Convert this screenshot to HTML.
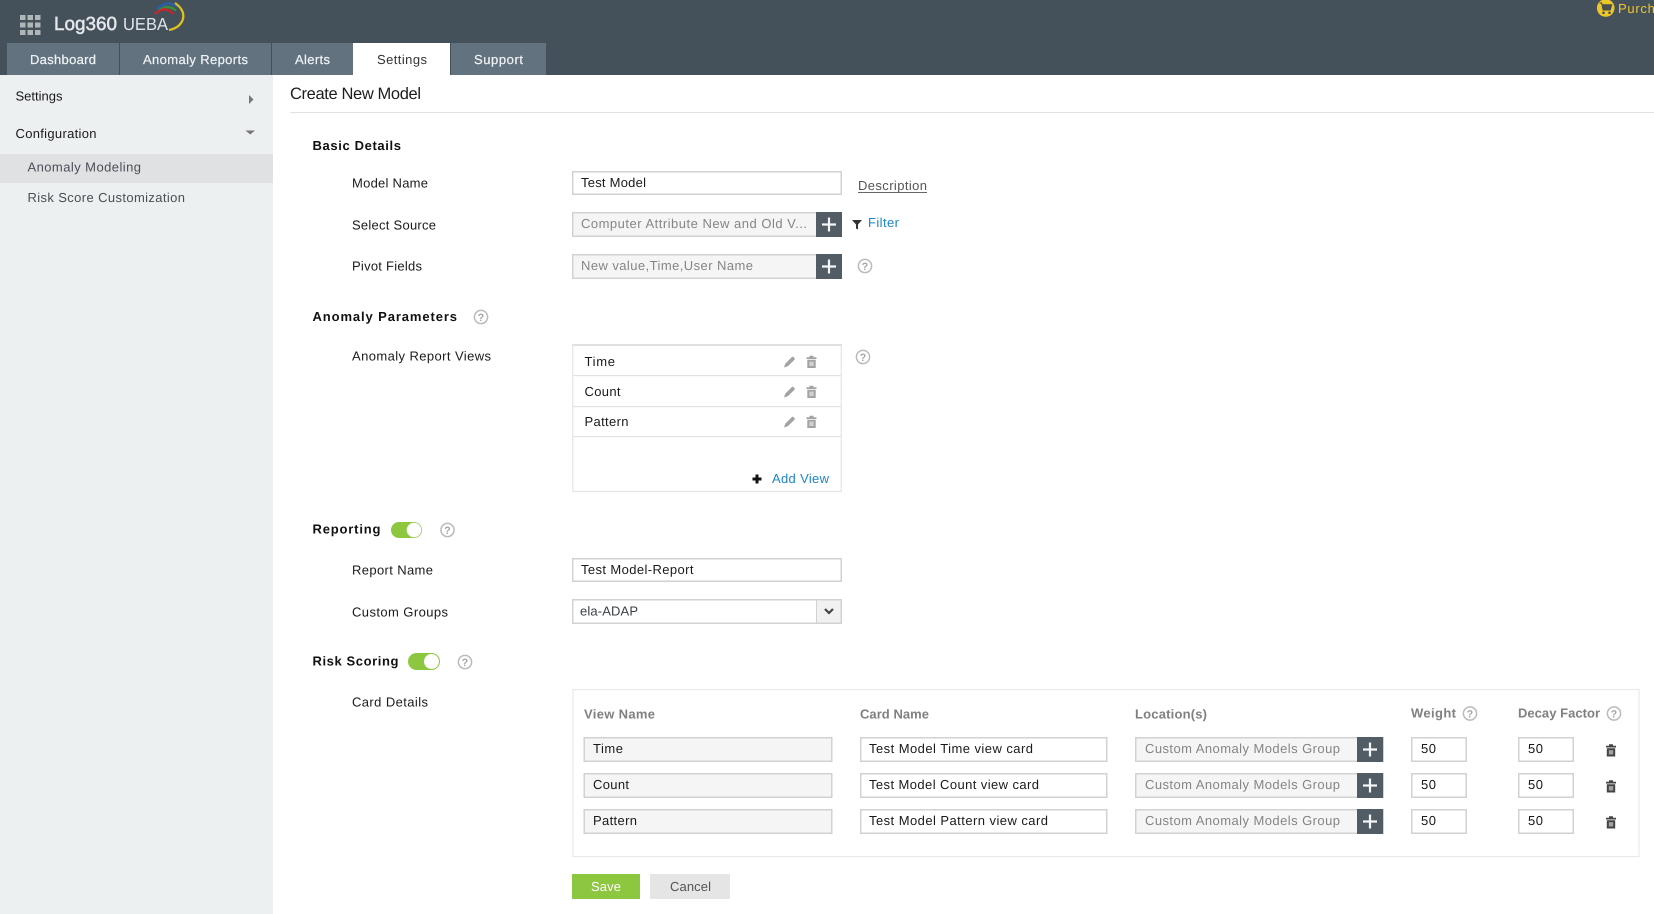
<!DOCTYPE html>
<html lang="en"><head><meta charset="utf-8"><title>Create New Model</title>
<style>
html,body{margin:0;padding:0;width:1654px;height:914px;overflow:hidden;background:#fff}
svg{display:block}
text{font-family:"Liberation Sans",sans-serif;font-size:13px;fill:#333;text-rendering:geometricPrecision}
.b{font-weight:bold;fill:#111}
.t{fill:#f0f3f5;stroke:#f0f3f5;stroke-width:.2px}
.g{fill:#858585}
.d{fill:#1a1a1a}
.h{font-weight:bold;fill:#808080}
.l{fill:#1a86c7}
.s{fill:#3a4046}
.q{font-size:10.5px;font-weight:bold;fill:#a5a5a5;text-anchor:middle}
.i{fill:#fff;stroke:#d2d2d2;stroke-width:1.5}
.r{fill:#f5f5f5;stroke:#d2d2d2;stroke-width:1.5}
</style></head><body>
<svg width="1654" height="914" viewBox="0 0 1654 914" xmlns="http://www.w3.org/2000/svg">
<defs>
<g id="help"><circle r="6.6" fill="#fff" stroke="#bbb" stroke-width="1.5"/></g>
<g id="plus"><rect x="-13" y="-12.500" width="26" height="25" fill="#515c65"/><path d="M-7 0H7M0-7V7" stroke="#f4f5f6" stroke-width="2.200"/></g>
<g id="pen"><path d="M-6 6l1.200-3.800 6.600-6.600a1.200 1.200 0 0 1 1.700 0l1 1a1.200 1.200 0 0 1 0 1.700L-2.200 4.800z" fill="#a3a3a3"/></g>
<g id="trash"><path d="M-5-4.800h10v1.800H-5zM-2-6.200h4v1.500h-4zM-4.200-2.200h8.400V6h-8.400z" fill="currentColor"/><rect x="-2.200" y="-.4" width="4.400" height="4.400" fill="#fff" opacity=".5"/></g>
</defs>

<!-- header -->
<rect width="1654" height="75" fill="#44515b"/>
<g fill="#b0b5b8">
<rect x="20" y="15" width="5.500" height="5"/><rect x="27.500" y="15" width="5.500" height="5"/><rect x="35" y="15" width="5.500" height="5"/>
<rect x="20" y="22.500" width="5.500" height="5"/><rect x="27.500" y="22.500" width="5.500" height="5"/><rect x="35" y="22.500" width="5.500" height="5"/>
<rect x="20" y="30" width="5.500" height="5"/><rect x="27.500" y="30" width="5.500" height="5"/><rect x="35" y="30" width="5.500" height="5"/>
</g>
<text x="54" y="30" textLength="63" lengthAdjust="spacingAndGlyphs" style="font-size:19px;fill:#e6e8e9;stroke:#e6e8e9;stroke-width:.5px">Log360</text>
<text x="123" y="30" textLength="45" lengthAdjust="spacingAndGlyphs" style="font-size:17.500px;fill:#e2e5e7">UEBA</text>
<g fill="none">
<path d="M157 9Q167-1 178 7" stroke="#2b5ea8" stroke-width="2.400"/>
<path d="M158 11.500Q167 3 176 10.500" stroke="#3a8f3f" stroke-width="2.400"/>
<path d="M155 14Q165 5 173.500 14" stroke="#c4262e" stroke-width="2.400"/>
<path d="M175 3Q185 10 183 19Q180 28 169 30" stroke="#e2c31d" stroke-width="2.200"/>
</g>
<rect x="7" y="43" width="112" height="32" fill="#62737f"/>
<rect x="120" y="43" width="151" height="32" fill="#62737f"/>
<rect x="272" y="43" width="81" height="32" fill="#62737f"/>
<rect x="353" y="43" width="97" height="32" fill="#fff"/>
<rect x="451" y="43" width="95" height="32" fill="#62737f"/>
<text class="t" x="30" y="64" textLength="66">Dashboard</text>
<text class="t" x="143" y="64" textLength="105">Anomaly Reports</text>
<text class="t" x="295" y="64" textLength="35">Alerts</text>
<text x="377" y="64" textLength="50">Settings</text>
<text class="t" x="474" y="64" textLength="49">Support</text>
<circle cx="1605.700" cy="8" r="8.800" fill="#edc728"/>
<path d="M1599.500 3h2.200l1.300 7h7.300l1.400-5.200h-9.300" fill="#4a4f4f" stroke="#4a4f4f"/><circle cx="1603.500" cy="12.800" r="1.300" fill="#4a4f4f"/><circle cx="1609.500" cy="12.800" r="1.300" fill="#4a4f4f"/>
<text x="1618" y="13" style="fill:#eec52b" textLength="60">Purchase</text>

<!-- sidebar -->
<rect y="75" width="273" height="839" fill="#ecf0f1"/>
<rect y="154" width="273" height="29" fill="#dfe1e3"/>
<text class="d" x="15.500" y="100.500" textLength="47">Settings</text>
<path d="M249 95l4.500 4.500-4.500 4.500z" fill="#777"/>
<text class="d" x="15.500" y="138" textLength="81">Configuration</text>
<path d="M245.500 130.500h9.500l-4.750 4z" fill="#777"/>
<text x="27.500" y="171.500" textLength="113.500" style="fill:#4a4f55">Anomaly Modeling</text>
<text x="27.500" y="202" textLength="157.500" style="fill:#4a4f55">Risk Score Customization</text>

<!-- main -->
<text x="290" y="99" textLength="131" style="font-size:16.500px;fill:#1d1d1d">Create New Model</text>
<rect x="290" y="112" width="1364" height="1" fill="#e2e2e2"/>

<text class="b" x="312.500" y="150" textLength="88.500">Basic Details</text>
<text class="d" x="352" y="187.500" textLength="76">Model Name</text>
<rect class="i" x="572.750" y="171.750" width="268.500" height="22.500"/>
<text class="d" x="581" y="187" textLength="65">Test Model</text>
<text x="858" y="190" textLength="69" style="fill:#555">Description</text>
<rect x="858" y="192" width="69" height="1" fill="#666"/>

<text class="d" x="352" y="229.500" textLength="84">Select Source</text>
<rect class="r" x="572.750" y="212.750" width="268.500" height="23.500"/>
<text class="g" x="581" y="228" textLength="226">Computer Attribute New and Old V...</text>
<use href="#plus" x="829" y="224.500"/>
<path d="M852 220h10l-4 4.500v5l-2-1v-4z" fill="#333"/>
<text class="l" x="868" y="227" textLength="31">Filter</text>

<text class="d" x="352" y="270.500" textLength="70">Pivot Fields</text>
<rect class="r" x="572.750" y="254.750" width="268.500" height="23.500"/>
<text class="g" x="581" y="270" textLength="172">New value,Time,User Name</text>
<use href="#plus" x="829" y="266.500"/>
<use href="#help" x="865" y="266"/><text class="q" x="865" y="270">?</text>

<text class="b" x="312.500" y="321" textLength="144.500">Anomaly Parameters</text>
<use href="#help" x="481" y="317"/><text class="q" x="481" y="321">?</text>
<text class="d" x="352" y="360.500" textLength="139">Anomaly Report Views</text>

<rect x="572.750" y="345" width="268.500" height="146.500" fill="#fff" stroke="#e4e4e4" stroke-width="1.200"/>
<rect x="572" y="344" width="270" height="2" fill="#e0e0e0"/>
<rect x="573" y="375" width="268" height="1.200" fill="#e2e2e2"/>
<rect x="573" y="406" width="268" height="1.200" fill="#e2e2e2"/>
<rect x="573" y="436" width="268" height="1.200" fill="#e2e2e2"/>
<text class="d" x="584.500" y="366" textLength="30.500">Time</text>
<text class="d" x="584.500" y="396" textLength="36">Count</text>
<text class="d" x="584.500" y="426" textLength="44">Pattern</text>
<g style="color:#a3a3a3">
<use href="#pen" x="790" y="361.500"/><use href="#trash" x="811.500" y="362"/>
<use href="#pen" x="790" y="391.500"/><use href="#trash" x="811.500" y="392"/>
<use href="#pen" x="790" y="421.500"/><use href="#trash" x="811.500" y="422"/>
</g>
<path d="M757 474.500v9M752.500 479h9" stroke="#111" stroke-width="3"/>
<text class="l" x="772" y="483" textLength="57">Add View</text>
<use href="#help" x="863" y="357"/><text class="q" x="863" y="361">?</text>

<text class="b" x="312.500" y="533.500" textLength="68">Reporting</text>
<rect x="391" y="522" width="31" height="16" rx="8" fill="#8dc63f"/>
<circle cx="414" cy="530" r="7.300" fill="#fff"/>
<use href="#help" x="447.500" y="530"/><text class="q" x="447.500" y="534">?</text>
<text class="d" x="352" y="574.500" textLength="81">Report Name</text>
<rect class="i" x="572.750" y="558.750" width="268.500" height="22.500"/>
<text class="d" x="581" y="574" textLength="112.500">Test Model-Report</text>
<text class="d" x="352" y="616.500" textLength="96">Custom Groups</text>
<rect class="i" x="572.750" y="599.750" width="268.500" height="23.500"/>
<rect x="816" y="600.500" width="24.500" height="22" fill="#f1f1f1"/><rect x="816" y="600" width="1" height="23" fill="#d2d2d2"/>
<path d="M825 609l4 4 4-4" fill="none" stroke="#444" stroke-width="2.200"/>
<text class="s" x="580" y="615.500" textLength="58">ela-ADAP</text>

<text class="b" x="312.500" y="665.500" textLength="86">Risk Scoring</text>
<rect x="408" y="653" width="32" height="17" rx="8.500" fill="#8dc63f"/>
<circle cx="431.500" cy="661.500" r="7.500" fill="#fff"/>
<use href="#help" x="465" y="662"/><text class="q" x="465" y="666">?</text>
<text class="d" x="352" y="706.500" textLength="76">Card Details</text>

<rect x="573" y="689.500" width="1066" height="167" fill="#fff" stroke="#e8e8e8" stroke-width="1.200"/>
<text class="h" x="584" y="718.500" textLength="71">View Name</text>
<text class="h" x="860" y="718.500" textLength="69">Card Name</text>
<text class="h" x="1135" y="718.500" textLength="72">Location(s)</text>
<text class="h" x="1411" y="717.500" textLength="45">Weight</text>
<text class="h" x="1518" y="717.500" textLength="82">Decay Factor</text>
<use href="#help" x="1470" y="713.500"/><text class="q" x="1470" y="717.500">?</text>
<use href="#help" x="1614" y="713.500"/><text class="q" x="1614" y="717.500">?</text>

<!-- row 1 -->
<rect class="r" x="584.250" y="737.750" width="247.500" height="23.500"/>
<text class="d" x="593" y="753" textLength="30">Time</text>
<rect class="i" x="860.750" y="737.750" width="246" height="23.500"/>
<text class="d" x="869" y="753" textLength="164">Test Model Time view card</text>
<rect class="r" x="1135.750" y="737.750" width="247.500" height="23.500"/>
<text class="g" x="1145" y="753" textLength="195">Custom Anomaly Models Group</text>
<use href="#plus" x="1370" y="749.500"/>
<rect class="i" x="1411.750" y="737.750" width="54.500" height="23.500"/>
<text class="d" x="1421" y="753" textLength="15">50</text>
<rect class="i" x="1518.750" y="737.750" width="54.500" height="23.500"/>
<text class="d" x="1528" y="753" textLength="15">50</text>
<use href="#trash" x="1611" y="750.500" style="color:#444"/>

<!-- row 2 -->
<rect class="r" x="584.250" y="773.750" width="247.500" height="23.500"/>
<text class="d" x="593" y="789" textLength="36">Count</text>
<rect class="i" x="860.750" y="773.750" width="246" height="23.500"/>
<text class="d" x="869" y="789" textLength="170">Test Model Count view card</text>
<rect class="r" x="1135.750" y="773.750" width="247.500" height="23.500"/>
<text class="g" x="1145" y="789" textLength="195">Custom Anomaly Models Group</text>
<use href="#plus" x="1370" y="785.500"/>
<rect class="i" x="1411.750" y="773.750" width="54.500" height="23.500"/>
<text class="d" x="1421" y="789" textLength="15">50</text>
<rect class="i" x="1518.750" y="773.750" width="54.500" height="23.500"/>
<text class="d" x="1528" y="789" textLength="15">50</text>
<use href="#trash" x="1611" y="786.500" style="color:#444"/>

<!-- row 3 -->
<rect class="r" x="584.250" y="809.750" width="247.500" height="23.500"/>
<text class="d" x="593" y="825" textLength="44">Pattern</text>
<rect class="i" x="860.750" y="809.750" width="246" height="23.500"/>
<text class="d" x="869" y="825" textLength="179">Test Model Pattern view card</text>
<rect class="r" x="1135.750" y="809.750" width="247.500" height="23.500"/>
<text class="g" x="1145" y="825" textLength="195">Custom Anomaly Models Group</text>
<use href="#plus" x="1370" y="821.500"/>
<rect class="i" x="1411.750" y="809.750" width="54.500" height="23.500"/>
<text class="d" x="1421" y="825" textLength="15">50</text>
<rect class="i" x="1518.750" y="809.750" width="54.500" height="23.500"/>
<text class="d" x="1528" y="825" textLength="15">50</text>
<use href="#trash" x="1611" y="822.500" style="color:#444"/>

<rect x="572" y="874" width="68" height="25" fill="#8dc63f"/>
<text x="591" y="891" textLength="30" style="fill:#fff">Save</text>
<rect x="650" y="874" width="80" height="25" fill="#e5e5e5"/>
<text x="670" y="891" textLength="41" style="fill:#555">Cancel</text>
</svg>
</body></html>
